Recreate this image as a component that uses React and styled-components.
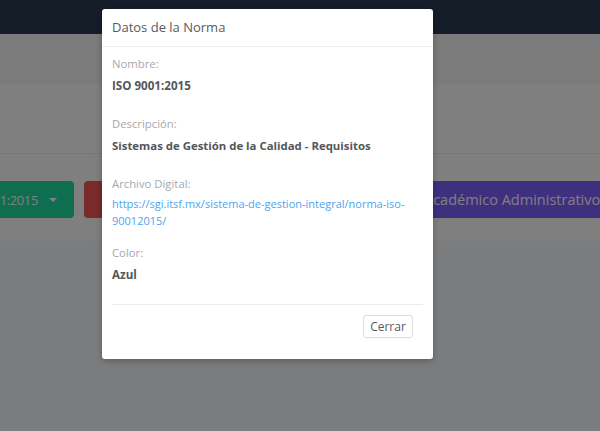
import React from "react";
import styled, { createGlobalStyle } from "styled-components";

const GlobalStyle = createGlobalStyle`
  html, body { margin: 0; padding: 0; }
  body {
    width: 600px;
    height: 431px;
    overflow: hidden;
    font-family: "Open Sans", "Liberation Sans", sans-serif;
    background: #ffffff;
  }
  * { box-sizing: border-box; }
`;

const Page = styled.div`
  position: relative;
  width: 600px;
  height: 431px;
  overflow: hidden;
  background: #f7f8fa;
`;

const Navbar = styled.header`
  height: 34px;
  background: #2a3b50;
`;

const SubBar = styled.div`
  height: 50px;
  background: #f6f7f9;
`;

const Section = styled.section`
  height: ${(p) => p.$h}px;
  background: #ffffff;
  border-bottom: ${(p) => (p.$line ? "1px solid #ececec" : "none")};
`;

const ButtonRow = styled.div`
  height: 87px;
  background: #ffffff;
  display: flex;
  align-items: flex-start;
  padding-top: 27px;
  gap: 10px;
  margin-left: -56px;
  white-space: nowrap;
`;

const PageButton = styled.div`
  flex: none;
  height: 37px;
  width: ${(p) => (p.$w ? `${p.$w}px` : "auto")};
  display: flex;
  align-items: center;
  gap: 11px;
  padding: 0 17px 0 ${(p) => p.$pl ?? 12}px;
  border-radius: 4px;
  background: ${(p) => p.$bg};
  color: #ffffff;
  font-size: ${(p) => p.$fs || 14}px;
  letter-spacing: ${(p) => p.$ls || 0}px;
`;

const Caret = styled.span`
  width: 0;
  height: 0;
  border-left: 4px solid transparent;
  border-right: 4px solid transparent;
  border-top: 4px solid #ffffff;
`;

const Backdrop = styled.div`
  position: absolute;
  inset: 0;
  background: rgba(0, 0, 0, 0.5);
  padding: 9px 0 0 102px;
`;

const Modal = styled.div`
  width: 331px;
  height: 350px;
  background: #ffffff;
  border-radius: 3px;
  box-shadow: 0 2px 6px rgba(0, 0, 0, 0.25);
  display: flex;
  flex-direction: column;
`;

const ModalHeader = styled.div`
  padding: 10px;
  border-bottom: 1px solid #e9edf2;
  font-size: 13px;
  line-height: 17px;
  color: #555b61;
`;

const ModalBody = styled.div`
  padding: 8px 10px 10px;
  display: flex;
  flex-direction: column;
`;

const Label = styled.div`
  font-size: 11.3px;
  line-height: 17px;
  color: #a6a9ac;
  margin-bottom: ${(p) => p.$mb ?? 5}px;
`;

const Value = styled.div`
  font-size: ${(p) => p.$fs || 11.4}px;
  line-height: 17px;
  font-weight: 700;
  color: #53575b;
  margin-bottom: 21px;
`;

const Link = styled.a`
  display: block;
  font-size: 11px;
  line-height: 17px;
  color: #4fa3ef;
  text-decoration: none;
  margin-bottom: 15px;
`;

const Footer = styled.div`
  border-top: 1px solid #e9edf2;
  padding: 10px;
  display: flex;
  justify-content: flex-end;
`;

const CloseButton = styled.button`
  height: 23px;
  width: 50px;
  padding: 0;
  border: 1px solid #d9dde2;
  border-radius: 3px;
  background: #ffffff;
  font-family: inherit;
  font-size: 12px;
  color: #555b61;
`;

export default function App() {
  return (
    <>
      <GlobalStyle />
      <Page>
        <Navbar />
        <SubBar />
        <Section $h={70} $line />
        <ButtonRow>
          <PageButton $bg="#1ddc9f" $fs={13} $ls={-0.4}>
            ISO 9001:2015 <Caret />
          </PageButton>
          <PageButton $bg="#f45454" $w={150} $pl={18}>Eliminar</PageButton>
          <PageButton $bg="#2f8cf0" $w={123}>Editar</PageButton>
          <PageButton $bg="#7e5efe" $fs={14.5}>Área Académico Administrativo</PageButton>
        </ButtonRow>
        <Backdrop>
          <Modal>
            <ModalHeader>Datos de la Norma</ModalHeader>
            <ModalBody>
              <Label>Nombre:</Label>
              <Value $fs={11.6}>ISO 9001:2015</Value>
              <Label>Descripción:</Label>
              <Value>Sistemas de Gestión de la Calidad - Requisitos</Value>
              <Label $mb={3}>Archivo Digital:</Label>
              <Link href="#">
                https://sgi.itsf.mx/sistema-de-gestion-integral/norma-iso-90012015/
              </Link>
              <Label>Color:</Label>
              <Value $fs={11.6}>Azul</Value>
              <Footer>
                <CloseButton>Cerrar</CloseButton>
              </Footer>
            </ModalBody>
          </Modal>
        </Backdrop>
      </Page>
    </>
  );
}
